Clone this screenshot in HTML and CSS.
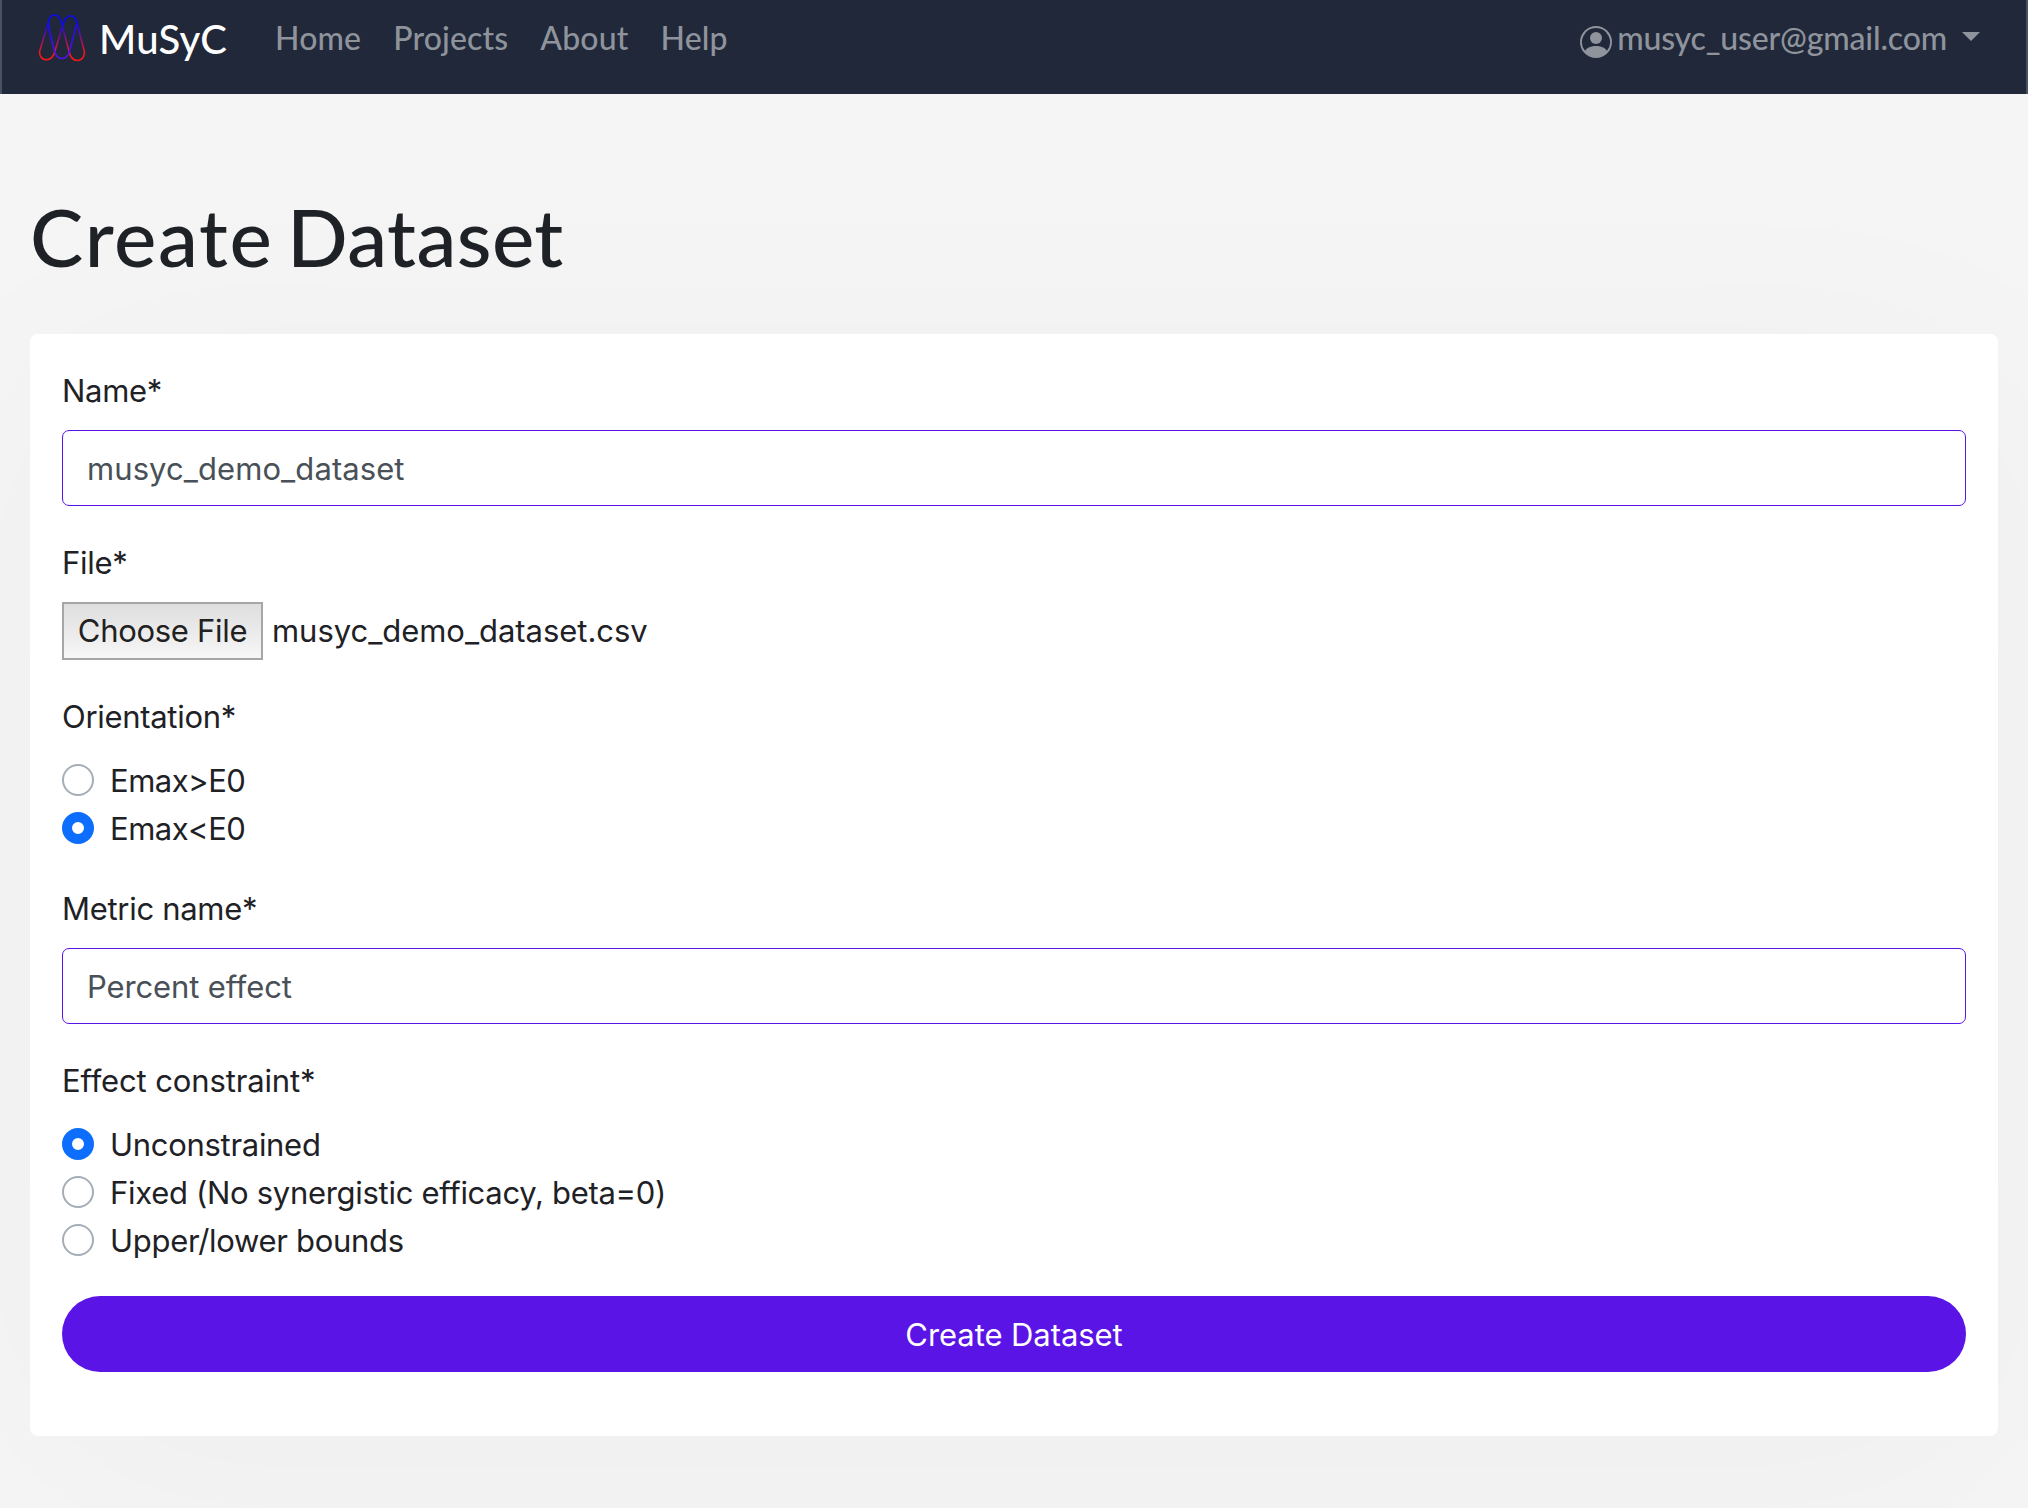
FILE: index.html
```html
<!DOCTYPE html>
<html lang="en">
<head>
<meta charset="utf-8">
<title>MuSyC - Create Dataset</title>
<link rel="stylesheet" href="styles.css">
</head>
<body>
<header class="navbar">
  <a class="brand">
    <svg class="logo" viewBox="0 0 48 48" width="48" height="48" fill="none" stroke-width="1.6">
      <defs>
        <linearGradient id="outer" x1="0" y1="0" x2="0" y2="48" gradientUnits="userSpaceOnUse">
          <stop offset=".2" stop-color="#0a0af0"/><stop offset=".8" stop-color="#f01818"/>
        </linearGradient>
        <linearGradient id="inner" x1="0" y1="0" x2="0" y2="48" gradientUnits="userSpaceOnUse">
          <stop offset=".1" stop-color="#1408f4"/><stop offset="1" stop-color="#5a14ea"/>
        </linearGradient>
      </defs>
      <path stroke="url(#outer)" d="M10.500 8L2 36C.5 41 3.500 45.700 8.500 45.700C13.500 45.700 16 41 17 37L24.500 12C26 6 29 1.700 33 1.700C37 1.700 38 5 39 9L46 36C47.500 41 44.500 46.500 39.500 46.500C34.500 46.500 32 42 31 37L23.500 9C22.500 4 20 1 16.500 1C13 1 11 4 10.500 8Z"/>
      <path stroke="url(#inner)" d="M10.500 8C9.800 14 13 24 16.500 37C17.500 41 19.500 44.500 24 44.500C28 44.500 30.500 41 31.500 37L38.800 10"/>
    </svg>
    <span class="brand-name">MuSyC</span>
  </a>
  <nav class="links">
    <a>Home</a><a>Projects</a><a>About</a><a>Help</a>
  </nav>
  <a class="account">
    <svg class="avatar" viewBox="0 0 16 16" width="32" height="32" fill="currentColor">
      <path d="M11 6a3 3 0 1 1-6 0 3 3 0 0 1 6 0z"/>
      <path fill-rule="evenodd" d="M0 8a8 8 0 1 1 16 0A8 8 0 0 1 0 8zm8-7a7 7 0 0 0-5.468 11.370C3.242 11.226 4.805 10 8 10s4.757 1.225 5.468 2.370A7 7 0 0 0 8 1z"/>
    </svg>
    <span class="email">musyc_user@gmail.com</span>
    <span class="caret"></span>
  </a>
</header>
<main class="page">
  <h1 class="title"><span class="title-lead">Create</span> Dataset</h1>
  <form class="card">
    <div class="field">
      <label class="label">Name*</label>
      <div class="input snake">musyc_demo_dataset</div>
    </div>
    <div class="field">
      <label class="label">File*</label>
      <div class="file"><span class="choose">Choose File</span><span class="filename">musyc_demo_dataset.csv</span></div>
    </div>
    <div class="field">
      <label class="label">Orientation*</label>
      <div class="option tight"><i class="radio"></i><span>Emax&gt;E0</span></div>
      <div class="option tight"><i class="radio checked"></i><span>Emax&lt;E0</span></div>
    </div>
    <div class="field">
      <label class="label">Metric name*</label>
      <div class="input">Percent effect</div>
    </div>
    <div class="field">
      <label class="label wide">Effect constraint*</label>
      <div class="option"><i class="radio checked"></i><span>Unconstrained</span></div>
      <div class="option"><i class="radio"></i><span>Fixed (No synergistic efficacy, beta=0)</span></div>
      <div class="option"><i class="radio"></i><span>Upper/lower bounds</span></div>
    </div>
    <button type="button" class="submit">Create Dataset</button>
  </form>
</main>
</body>
</html>
```
FILE: styles.css
```css
* { box-sizing: border-box; }
body {
  margin: 0;
  min-height: 1508px;
  background: #f5f5f5;
  color: #1e2125;
  font: 400 31px/50px Inter, sans-serif;
  letter-spacing: -0.3px;
  overflow: hidden;
}
.navbar {
  display: flex;
  align-items: flex-start;
  height: 94px;
  padding: 0 46px 0 36px;
  background: #20283a;
  border: solid #465162;
  border-width: 0 2px;
  font: 500 32px/48px Lato, sans-serif;
  letter-spacing: 0;
  color: #8f939c;
}
.brand { display: flex; color: #fff; }
.logo { margin-top: 14px; }
.brand-name { margin: 9px 0 0 13px; width: 160px; font-size: 40px; line-height: 60px; letter-spacing: 0.2px; }
.links { display: flex; gap: 32px; margin-top: 14px; padding-left: 16px; letter-spacing: 0.15px; }
.account { display: flex; margin: 14px 0 0 auto; }
.avatar { margin: 12px 5px 0 0; }
.email { letter-spacing: -0.17px; }
.caret {
  margin: 18px 0 0 15px;
  height: 0;
  border: 9px solid transparent;
  border-top-color: currentColor;
  border-bottom: 0;
}
.page { padding: 94px 30px 0; }
.title {
  margin: 0 0 50px;
  font: 500 80px/96px Lato, sans-serif;
  letter-spacing: 0.4px;
  word-spacing: -7px;
}
.title-lead { letter-spacing: 1.6px; }
.card {
  height: 1102px;
  padding: 32px;
  background: #fff;
  border-radius: 8px;
  box-shadow: 0 32px 250px rgba(0, 0, 0, .03);
}
.field { margin-bottom: 32px; }
.label { display: block; height: 48px; margin-bottom: 16px; }
.wide { letter-spacing: -0.13px; }
.tight { letter-spacing: -0.5px; }
.input {
  height: 76px;
  padding: 13px 24px;
  border: 1px solid #5a14e6;
  border-radius: 7px;
  color: #495057;
  letter-spacing: -0.13px;
}
.snake { letter-spacing: 0.08px; }
.file { display: flex; align-items: center; height: 58px; }
.choose {
  width: 201px;
  height: 58px;
  border: 2px solid #a6a6a6;
  background: linear-gradient(#dedede, #f7f7f7);
  color: #212121;
  line-height: 54px;
  text-align: center;
}
.filename { margin-left: 9px; letter-spacing: -0.04px; }
.option { display: flex; align-items: center; height: 48px; }
.option span { padding-top: 2px; line-height: 48px; }
.radio { width: 32px; height: 32px; margin-right: 16px; border: 2px solid #a5adb6; border-radius: 50%; }
.radio.checked { border: 10px solid #0d6efd; }
.submit {
  display: block;
  width: 100%;
  height: 76px;
  padding: 2px 0 0;
  border: 0;
  border-radius: 38px;
  background: #5a14e6;
  color: #fff;
  font: inherit;
  letter-spacing: -0.07px;
}
```
